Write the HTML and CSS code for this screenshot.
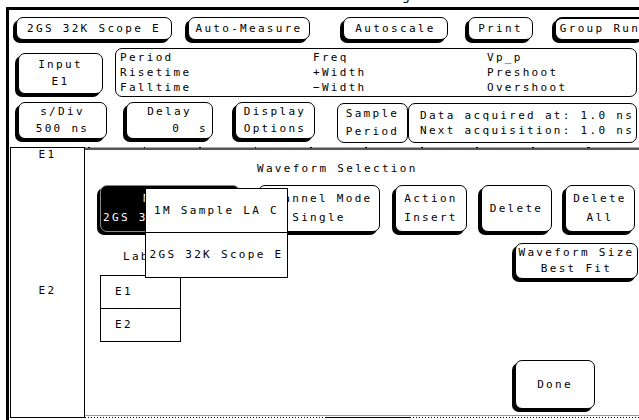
FILE: index.html
```html
<!doctype html>
<html>
<head>
  <title>Waveform Selection</title>
  <link rel="stylesheet" href="styles.css">
</head>
<body>
<div class="screen">
  <div class="caption"><div class="caption-text">g</div></div>

  <div class="frame">
    <div class="row row-top">
      <div class="btn b-scope">2GS 32K Scope E</div>
      <div class="btn b-measure">Auto-Measure</div>
      <div class="btn b-autoscale">Autoscale</div>
      <div class="btn b-print">Print</div>
      <div class="btn b-group">Group Run</div>
    </div>

    <div class="row row-meas">
      <div class="btn b-input"><span>Input</span><span>E1</span></div>
      <div class="meas">
        <div class="m1">Period<br>Risetime<br>Falltime</div>
        <div class="m2">Freq<br>+Width<br>&minus;Width</div>
        <div class="m3">Vp_p<br>Preshoot<br>Overshoot</div>
      </div>
    </div>

    <div class="row row-time">
      <div class="btn b-sdiv"><span>s/Div</span><span>500 ns</span></div>
      <div class="btn b-delay"><span>Delay</span><span class="val-right">0  s</span></div>
      <div class="btn b-display"><span>Display</span><span>Options</span></div>
      <div class="sample"><span>Sample</span><span>Period</span></div>
      <div class="acq">
        <span>Data acquired at: 1.0 ns</span>
        <span>Next acquisition: 1.0 ns</span>
      </div>
    </div>

    <div class="main">
      <div class="side">
        <div>E1</div>
        <div class="side-e2">E2</div>
      </div>

      <div class="panel">
        <div class="ruler"></div>
        <div class="title">Waveform Selection</div>

        <div class="tools">
          <div class="btn b-module"><span>Module</span><span>2GS 32K Scope E</span></div>
          <div class="btn b-channel"><span>Channel Mode</span><span>Single</span></div>
          <div class="btn b-action"><span>Action</span><span>Insert</span></div>
          <div class="btn b-delete">Delete</div>
          <div class="btn b-delall"><span>Delete</span><span>All</span></div>
        </div>

        <div class="lower">
          <div class="labels-col">
            <div class="labels-text">Labels</div>
            <div class="wf-table">
              <div class="wf-row">E1</div>
              <div class="wf-row">E2</div>
            </div>
          </div>
          <div class="right-col">
            <div class="btn b-size"><span>Waveform Size</span><span>Best Fit</span></div>
            <div class="btn b-done">Done</div>
          </div>
        </div>

        <div class="scroll">
          <div class="track t-left"></div>
          <div class="thumb"></div>
          <div class="track"></div>
        </div>

        <!-- module choice menu, open over the Module button -->
        <div class="popup">
          <div class="popup-item">1M Sample LA C</div>
          <div class="popup-item">2GS 32K Scope E</div>
        </div>
      </div>
    </div>
  </div>
</div>
</body>
</html>
```

FILE: styles.css
```css
body {
  margin: 0;
  background: #fff;
}

.screen {
  width: 639px;
  height: 420px;
  overflow: hidden;
  color: #000;
  font-family: "DejaVu Sans Mono", "Liberation Mono", monospace;
  font-size: 11px;
  letter-spacing: 2.3px;
  white-space: nowrap;
}

.caption {
  height: 7px;
  overflow: hidden;
}

.caption-text {
  margin: -11px 0 0 402px;
  font-size: 13px;
  line-height: 14px;
}

.frame {
  height: 410px;
  margin-left: 6px;
  border-left: 3px solid #000;
  border-top: 3px solid #000;
}

.row {
  display: flex;
  align-items: flex-start;
}

/* Buttons: thin outline with a heavy left/bottom edge */
.btn {
  box-sizing: border-box;
  flex: none;
  display: flex;
  flex-direction: column;
  align-items: center;
  justify-content: space-evenly;
  border: 1px solid #000;
  border-radius: 7px;
  box-shadow: -3px 3px 0 #000;
  background: #fff;
  line-height: 14px;
}

.row-top {
  margin-top: 7px;
  height: 23px;
}

.row-top .btn {
  height: 23px;
}

.b-scope { margin-left: 7px; width: 156px; }
.b-measure { margin-left: 16px; width: 122px; }
.b-autoscale { margin-left: 33px; width: 105px; }
.b-print { margin-left: 20px; width: 65px; }
.b-group { margin-left: 22px; width: 90px; border-top-width: 2px; }

.row-meas {
  margin-top: 8px;
}

.b-input {
  margin: 5px 0 0 9px;
  width: 85px;
  height: 41px;
}

.meas {
  box-sizing: border-box;
  display: flex;
  margin-left: 12px;
  width: 522px;
  height: 49px;
  padding: 1px 0 0 4px;
  border: 1px solid #000;
  border-radius: 7px;
  line-height: 15px;
}

.m1 { width: 193px; }
.m2 { width: 174px; }

.row-time {
  margin-top: 5px;
}

.row-time .btn {
  height: 37px;
}

.b-sdiv { margin-left: 9px; width: 89px; }
.b-delay { margin-left: 19px; width: 87px; }
.b-display { margin-left: 22px; width: 80px; }

.val-right {
  align-self: stretch;
  padding-right: 4px;
  text-align: right;
  white-space: pre;
}

.sample,
.acq {
  box-sizing: border-box;
  display: flex;
  flex-direction: column;
  margin-top: 1px;
  height: 40px;
  border: 1px solid #000;
  border-radius: 7px;
}

.sample {
  margin-left: 22px;
  width: 71px;
  align-items: center;
  justify-content: space-evenly;
  line-height: 14px;
}

.acq {
  width: 229px;
  padding-left: 11px;
  justify-content: center;
  line-height: 15px;
}

.main {
  display: flex;
  margin-top: 4px;
  height: 271px;
}

.side {
  box-sizing: border-box;
  margin-left: 1px;
  width: 75px;
  border: 1px solid #000;
  line-height: 14px;
  text-align: center;
}

.side-e2 {
  margin-top: 122px;
}

.panel {
  position: relative;
  flex: 1;
  display: flex;
  flex-direction: column;
}

.ruler {
  height: 3px;
  background:
    repeating-linear-gradient(90deg, transparent 0 3px, #000 3px 5px, transparent 5px 55.5px) top / 100% 1px no-repeat,
    linear-gradient(#aaa 0 1px, #555 1px 3px);
}

.title {
  margin: 12px 0 0 172px;
  line-height: 14px;
}

.tools {
  display: flex;
  align-items: flex-start;
  margin-top: 9px;
}

.tools .btn {
  height: 47px;
}

.b-module {
  margin-left: 15px;
  width: 140px;
  background: #000;
  color: #fff;
  border-color: #888;
}

.b-channel { margin-left: 18px; width: 122px; }
.b-action { margin-left: 15px; width: 72px; }
.b-delete { margin-left: 14px; width: 71px; }
.b-delall { margin-left: 13px; width: 70px; }

.lower {
  display: flex;
  margin-top: 11px;
}

.labels-col {
  margin-left: 15px;
  width: 81px;
}

.labels-text {
  margin: 7px 0 0 23px;
  line-height: 14px;
}

.wf-table {
  margin-top: 11px;
  border: 1px solid #000;
}

.wf-row {
  height: 32px;
  padding-left: 14px;
  line-height: 32px;
}

.wf-row + .wf-row {
  border-top: 1px solid #000;
}

.right-col {
  display: flex;
  flex-direction: column;
  margin: 0 1px 0 auto;
  width: 123px;
}

.b-size {
  width: 123px;
  height: 36px;
}

.b-done {
  margin-top: 81px;
  width: 80px;
  height: 49px;
}

.scroll {
  box-sizing: border-box;
  display: flex;
  align-items: flex-end;
  margin-top: auto;
  height: 3px;
  border-top: 1px solid #999;
}

.track {
  flex: 1;
  height: 1px;
  background: repeating-linear-gradient(90deg, #000 0 1px, transparent 1px 3px);
}

.track.t-left {
  flex: none;
  width: 240px;
}

.thumb {
  width: 85px;
  height: 1px;
  background: #000;
}

.popup {
  position: absolute;
  left: 60px;
  top: 41px;
  box-sizing: border-box;
  width: 143px;
  border: 1px solid #000;
  background: #fff;
}

.popup-item {
  display: flex;
  align-items: center;
  justify-content: center;
  height: 43px;
  line-height: 14px;
}

.popup-item + .popup-item {
  height: 44px;
  border-top: 1px solid #000;
}
```
